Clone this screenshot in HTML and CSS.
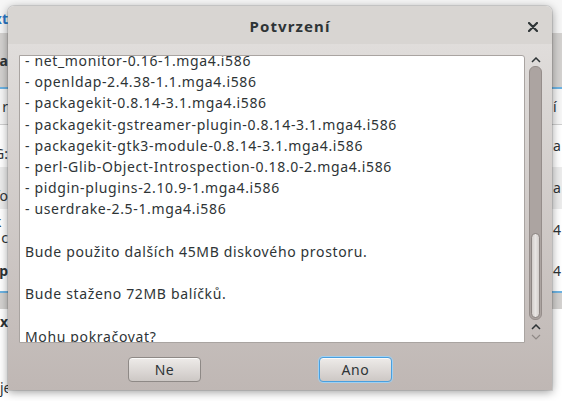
FILE: index.html
```html
<!DOCTYPE html>
<html lang="cs">
<head>
    <meta charset="UTF-8">
    <title>Potvrzení</title>
    <link rel="stylesheet" href="styles.css">
</head>
<body>

    <!-- Background application (mostly hidden behind the dialog) -->
    <div class="app">
        <div class="row top"><span class="l link">xt</span><span class="r"></span></div>
        <div class="row band"><span class="l bold">a</span><span class="r"></span></div>
        <div class="row plain"><span class="l">r</span><span class="r">í</span></div>
        <div class="row item"><span class="l"><b>el</b><br>G:</span><span class="r">a</span></div>
        <div class="row item alt"><span class="l"><b>el</b><br>fo</span><span class="r">a</span></div>
        <div class="row item"><span class="l"><b>ik</b><br>c</span><span class="r">4</span></div>
        <div class="row item sel"><span class="l bold">p</span><span class="r">4</span></div>
        <div class="row grey"><span class="l"></span><span class="r"></span></div>
        <div class="row rest"><span class="l"><b>x</b><br><br><br>je</span><span class="r"></span></div>
    </div>

    <!-- Confirmation dialog -->
    <div class="dialog">
        <div class="dialog-header">
            <span class="title">Potvrzení</span>
            <svg class="close" width="10" height="10" viewBox="0 0 10 10">
                <path d="M1 1 L9 9 M9 1 L1 9" stroke="#2e3436" stroke-width="2.2" stroke-linecap="round"/>
            </svg>
        </div>

        <div class="dialog-body">
            <div class="view">
                <div class="textbox">
                    <div class="lines">
                        <p>- net_monitor-0.16-1.mga4.i586</p>
                        <p>- openldap-2.4.38-1.1.mga4.i586</p>
                        <p>- packagekit-0.8.14-3.1.mga4.i586</p>
                        <p>- packagekit-gstreamer-plugin-0.8.14-3.1.mga4.i586</p>
                        <p>- packagekit-gtk3-module-0.8.14-3.1.mga4.i586</p>
                        <p>- perl-Glib-Object-Introspection-0.18.0-2.mga4.i586</p>
                        <p>- pidgin-plugins-2.10.9-1.mga4.i586</p>
                        <p>- userdrake-2.5-1.mga4.i586</p>
                        <p>&nbsp;</p>
                        <p>Bude použito dalších 45MB diskového prostoru.</p>
                        <p>&nbsp;</p>
                        <p>Bude staženo 72MB balíčků.</p>
                        <p>&nbsp;</p>
                        <p>Mohu pokračovat?</p>
                    </div>
                </div>

                <div class="scrollbar">
                    <svg class="step" width="10" height="6" viewBox="0 0 10 6">
                        <path d="M1 5 L5 1 L9 5" fill="none" stroke="#2e3436" stroke-width="1.5"/>
                    </svg>
                    <div class="trough">
                        <div class="thumb"></div>
                    </div>
                    <svg class="step" width="10" height="6" viewBox="0 0 10 6">
                        <path d="M1 5 L5 1 L9 5" fill="none" stroke="#2e3436" stroke-width="1.5"/>
                    </svg>
                    <svg class="step off" width="10" height="6" viewBox="0 0 10 6">
                        <path d="M1 1 L5 5 L9 1" fill="none" stroke="#8f8986" stroke-width="1.2"/>
                    </svg>
                </div>
            </div>

            <div class="buttons">
                <button class="btn">Ne</button>
                <button class="btn focus">Ano</button>
            </div>
        </div>
    </div>

</body>
</html>
```

FILE: styles.css
```css
/* General */
* { margin: 0; padding: 0; box-sizing: border-box; }
body { width: 562px; height: 401px; overflow: hidden; background: #f6f6f6;
    font-family: "Noto Sans", "DejaVu Sans", sans-serif; color: #2e3436; position: relative; }

/* Background app */
.app { display: flex; flex-direction: column; height: 401px; font-size: 14px; }
.row { display: flex; justify-content: space-between; }
.row .l { width: 8px; overflow: hidden; display: flex; justify-content: flex-end; white-space: nowrap; }
.row .r { width: 10px; overflow: hidden; white-space: nowrap; padding-left: 1px; }
.row.top { height: 33px; align-items: center; padding-top: 4px; }
.link { color: #2a76c6; font-weight: bold; }
.bold { font-weight: bold; }
.row.band { height: 56px; background: #d4d2d0; border-bottom: 2px solid #6db3e3; align-items: center; }
.row.plain { height: 36px; align-items: center; border-bottom: 1px solid #cfcfcf; }
.row.item { height: 42px; align-items: center; line-height: 16px; background: #ffffff; }
.row.item.alt { background: #ececec; }
.row.sel { border-bottom: 2px solid #6db3e3; }
.row.grey { height: 16px; background: #d4d2d0; }
.row.rest { flex: 1; background: #ffffff; line-height: 22px; padding-top: 2px; }
.row.rest .l { display: block; text-align: right; }

/* Dialog */
.dialog { position: absolute; left: 8px; top: 6px; width: 544px; height: 384px;
    display: flex; flex-direction: column; border-radius: 6px 6px 0 0; overflow: hidden;
    box-shadow: 0 2px 10px rgba(0, 0, 0, 0.4), 0 0 0 1px rgba(0, 0, 0, 0.1); }
.dialog-header { height: 39px; background: #d8d5d2; display: flex; align-items: center;
    justify-content: center; position: relative; }
.title { font-weight: bold; font-size: 15px; letter-spacing: 1.1px; margin-left: 20px; margin-top: 2px; }
.close { position: absolute; right: 14px; top: 16px; }

.dialog-body { flex: 1; background: linear-gradient(#e0dddb, #bfb7b4);
    padding: 11px 10px 8px 11px; display: flex; flex-direction: column; }
.view { display: flex; gap: 4px; height: 288px; }
.textbox { width: 506px; background: #fff; border: 1px solid #a9a4a1; border-radius: 0 3px 0 0;
    overflow: hidden; }
.lines { margin-top: -6px; padding-left: 5px; font-size: 14px; letter-spacing: 0.65px;
    line-height: 21.2px; white-space: nowrap; }

/* Scrollbar */
.scrollbar { width: 13px; display: flex; flex-direction: column; align-items: center; }
.step { margin: 2px 0 3px; flex: none; }
.step.off { margin-top: 1px; }
.trough { flex: 1; width: 13px; background: #aca4a1; border: 1px solid #958d8a; border-radius: 6px;
    display: flex; flex-direction: column; justify-content: flex-end; padding: 0 1px 1px; margin-bottom: 2px; }
.thumb { height: 85px; background: linear-gradient(90deg, #d3cecb, #e8e5e3, #d3cecb);
    border: 1px solid #8c8582; border-radius: 5px; }

/* Buttons */
.buttons { display: flex; gap: 118px; padding: 14px 0 0 109px; }
.btn { width: 73px; height: 25px; font-family: inherit; font-size: 14px; letter-spacing: 0.6px; color: #2e3436;
    background: linear-gradient(#eeebe9, #cdc8c5); border: 1px solid #8e8986; border-radius: 4px;
    box-shadow: inset 0 1px 0 #fbfaf9; }
.btn.focus { border-color: #4a9fde; box-shadow: 0 0 0 1px #9fd0f2, inset 0 1px 0 #fbfaf9; }
```
